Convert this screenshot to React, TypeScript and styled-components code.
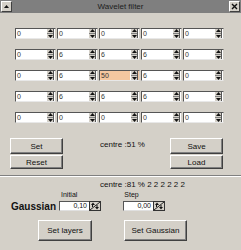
import React from 'react';
import styled, { createGlobalStyle } from 'styled-components';

const GlobalStyle = createGlobalStyle`
    html, body {
        margin: 0;
        padding: 0;
        background: #d4d0c8;
    }
    * {
        box-sizing: border-box;
    }
`;

const Window = styled.div`
    width: 241px;
    height: 250px;
    background: #d4d0c8;
    font-family: 'Liberation Sans', Arial, sans-serif;
    font-size: 8px;
    color: #111;
    display: flex;
    flex-direction: column;
    overflow: hidden;
`;

const TitleBar = styled.div`
    height: 13px;
    background: #7f7f7f;
    display: flex;
    align-items: center;
    justify-content: space-between;
    padding: 0 1px;
`;

const TitleText = styled.div`
    flex: 1;
    text-align: center;
    color: #1c1c1c;
    font-size: 8px;
    line-height: 13px;
`;

const TitleButton = styled.div`
    width: 11px;
    height: 11px;
    background: #d4d0c8;
    border-top: 1px solid #fff;
    border-left: 1px solid #fff;
    border-right: 1px solid #404040;
    border-bottom: 1px solid #404040;
    display: flex;
    align-items: center;
    justify-content: center;
`;

const Grid = styled.div`
    margin-top: 15px;
    padding-left: 15px;
    display: flex;
    flex-direction: column;
    gap: 10px;
`;

const GridRow = styled.div`
    display: flex;
    gap: 1px;
`;

const Field = styled.div<{ $highlight?: boolean }>`
    width: 41px;
    height: 11px;
    background: ${p => (p.$highlight ? '#f4c7a0' : '#fff')};
    border-top: 1px solid #555;
    border-left: 1px solid #555;
    border-right: 1px solid #d4d0c8;
    border-bottom: 1px solid #e8e8e8;
    display: flex;
    align-items: stretch;
    justify-content: space-between;
`;

const FieldValue = styled.div`
    padding-left: 1px;
    font-size: 7px;
    line-height: 9px;
    color: #333;
`;

const Spinner = styled.div`
    width: 8px;
    margin-right: 1px;
    background: #d4d0c8;
    border-left: 1px solid #fff;
    border-right: 1px solid #555;
    display: flex;
    flex-direction: column;
    align-items: center;
    justify-content: space-around;
`;

const ButtonsRow = styled.div`
    margin-top: 15px;
    padding: 0 18px 0 10px;
    display: grid;
    grid-template-columns: 53px 1fr 53px;
`;

const ButtonStack = styled.div`
    display: flex;
    flex-direction: column;
    gap: 1px;
`;

const WinButton = styled.div<{ $w?: number; $h?: number }>`
    width: ${p => p.$w ?? 53}px;
    height: ${p => p.$h ?? 15}px;
    background: #d4d0c8;
    border-top: 1px solid #fff;
    border-left: 1px solid #fff;
    border-right: 1px solid #404040;
    border-bottom: 1px solid #404040;
    box-shadow: inset -1px -1px 0 #808080;
    display: flex;
    align-items: center;
    justify-content: center;
    font-size: 8px;
    color: #111;
`;

const CentreText = styled.div`
    padding: 2px 0 0 37px;
    font-size: 8px;
`;

const Separator = styled.div`
    margin-top: 6px;
    height: 2px;
    border-top: 1px solid #808080;
    border-bottom: 1px solid #fff;
`;

const Status = styled.div`
    margin-top: 3px;
    padding-left: 100px;
    font-size: 8px;
    line-height: 9px;
    white-space: nowrap;
`;

const LabelsRow = styled.div`
    margin-top: 1px;
    display: flex;
    font-size: 7px;
    line-height: 10px;
`;

const Label = styled.div<{ $x: number }>`
    margin-left: ${p => p.$x}px;
`;

const GaussRow = styled.div`
    margin-top: 1px;
    display: flex;
    align-items: center;
    height: 10px;
`;

const GaussLabel = styled.div`
    width: 48px;
    padding-left: 11px;
    font-size: 10px;
    font-weight: bold;
    box-sizing: content-box;
    margin-right: 0;
`;

const NumBox = styled.div<{ $gap?: number }>`
    margin-left: ${p => p.$gap ?? 0}px;
    width: 30px;
    height: 10px;
    background: #fff;
    border-top: 1px solid #555;
    border-left: 1px solid #555;
    border-bottom: 1px solid #e0e0e0;
    font-size: 7px;
    line-height: 8px;
    text-align: right;
    padding-right: 2px;
`;

const StepIcon = styled.div`
    width: 12px;
    height: 10px;
    display: flex;
`;

const ActionRow = styled.div`
    margin-top: 9px;
    display: flex;
    padding-left: 38px;
    gap: 32px;
`;

const Arrows = () => (
    <>
        <svg width="5" height="3" viewBox="0 0 5 3">
            <path d="M0 3 L2.5 0 L5 3 Z" fill="#111" />
        </svg>
        <svg width="6" height="1" viewBox="0 0 6 1">
            <rect width="6" height="1" fill="#808080" />
        </svg>
        <svg width="5" height="3" viewBox="0 0 5 3">
            <path d="M0 0 L2.5 3 L5 0 Z" fill="#111" />
        </svg>
    </>
);

const SpinField: React.FC<{ value: string; highlight?: boolean }> = ({ value, highlight }) => (
    <Field $highlight={highlight}>
        <FieldValue>{value}</FieldValue>
        <Spinner>
            <Arrows />
        </Spinner>
    </Field>
);

const StepGlyph = () => (
    <StepIcon>
        <svg width="12" height="10" viewBox="0 0 12 10">
            <rect x="0.5" y="0.5" width="11" height="9" fill="#d4d0c8" stroke="#333" />
            <path d="M1 9 L11 1" stroke="#222" strokeWidth="1" />
            <path d="M2 4 L4 1.5 L6 4 Z" fill="#111" />
            <path d="M3.5 4 L3.5 6" stroke="#111" />
            <path d="M6 6 L8 8.5 L10 6 Z" fill="#111" />
            <path d="M8 4 L8 6" stroke="#111" />
        </svg>
    </StepIcon>
);

const values = [
    ['0', '0', '0', '0', '0'],
    ['0', '6', '6', '6', '0'],
    ['0', '6', '50', '6', '0'],
    ['0', '6', '6', '6', '0'],
    ['0', '0', '0', '0', '0'],
];

export default function App() {
    return (
        <>
            <GlobalStyle />
            <Window>
                <TitleBar>
                    <TitleButton>
                        <svg width="5" height="3" viewBox="0 0 5 3">
                            <path d="M0 3 L2.5 0 L5 3 Z" fill="#111" />
                        </svg>
                    </TitleButton>
                    <TitleText>Wavelet filter</TitleText>
                    <TitleButton>
                        <svg width="7" height="7" viewBox="0 0 7 7">
                            <path d="M1 1 L6 6 M6 1 L1 6" stroke="#111" strokeWidth="1.4" />
                        </svg>
                    </TitleButton>
                </TitleBar>

                <Grid>
                    {values.map((row, r) => (
                        <GridRow key={r}>
                            {row.map((v, c) => (
                                <SpinField key={c} value={v} highlight={r === 2 && c === 2} />
                            ))}
                        </GridRow>
                    ))}
                </Grid>

                <ButtonsRow>
                    <ButtonStack>
                        <WinButton $h={16}>Set</WinButton>
                        <WinButton $h={14}>Reset</WinButton>
                    </ButtonStack>
                    <CentreText>centre :51 %</CentreText>
                    <ButtonStack>
                        <WinButton $h={16}>Save</WinButton>
                        <WinButton $h={14}>Load</WinButton>
                    </ButtonStack>
                </ButtonsRow>

                <Separator />

                <Status>centre :81 % 2 2 2 2 2 2</Status>

                <LabelsRow>
                    <Label $x={61}>Initial</Label>
                    <Label $x={47}>Step</Label>
                </LabelsRow>

                <GaussRow>
                    <GaussLabel>Gaussian</GaussLabel>
                    <NumBox>0,10</NumBox>
                    <StepGlyph />
                    <NumBox $gap={22}>0,00</NumBox>
                    <StepGlyph />
                </GaussRow>

                <ActionRow>
                    <WinButton $w={54} $h={21}>Set layers</WinButton>
                    <WinButton $w={63} $h={21}>Set Gaussian</WinButton>
                </ActionRow>
            </Window>
        </>
    );
}
